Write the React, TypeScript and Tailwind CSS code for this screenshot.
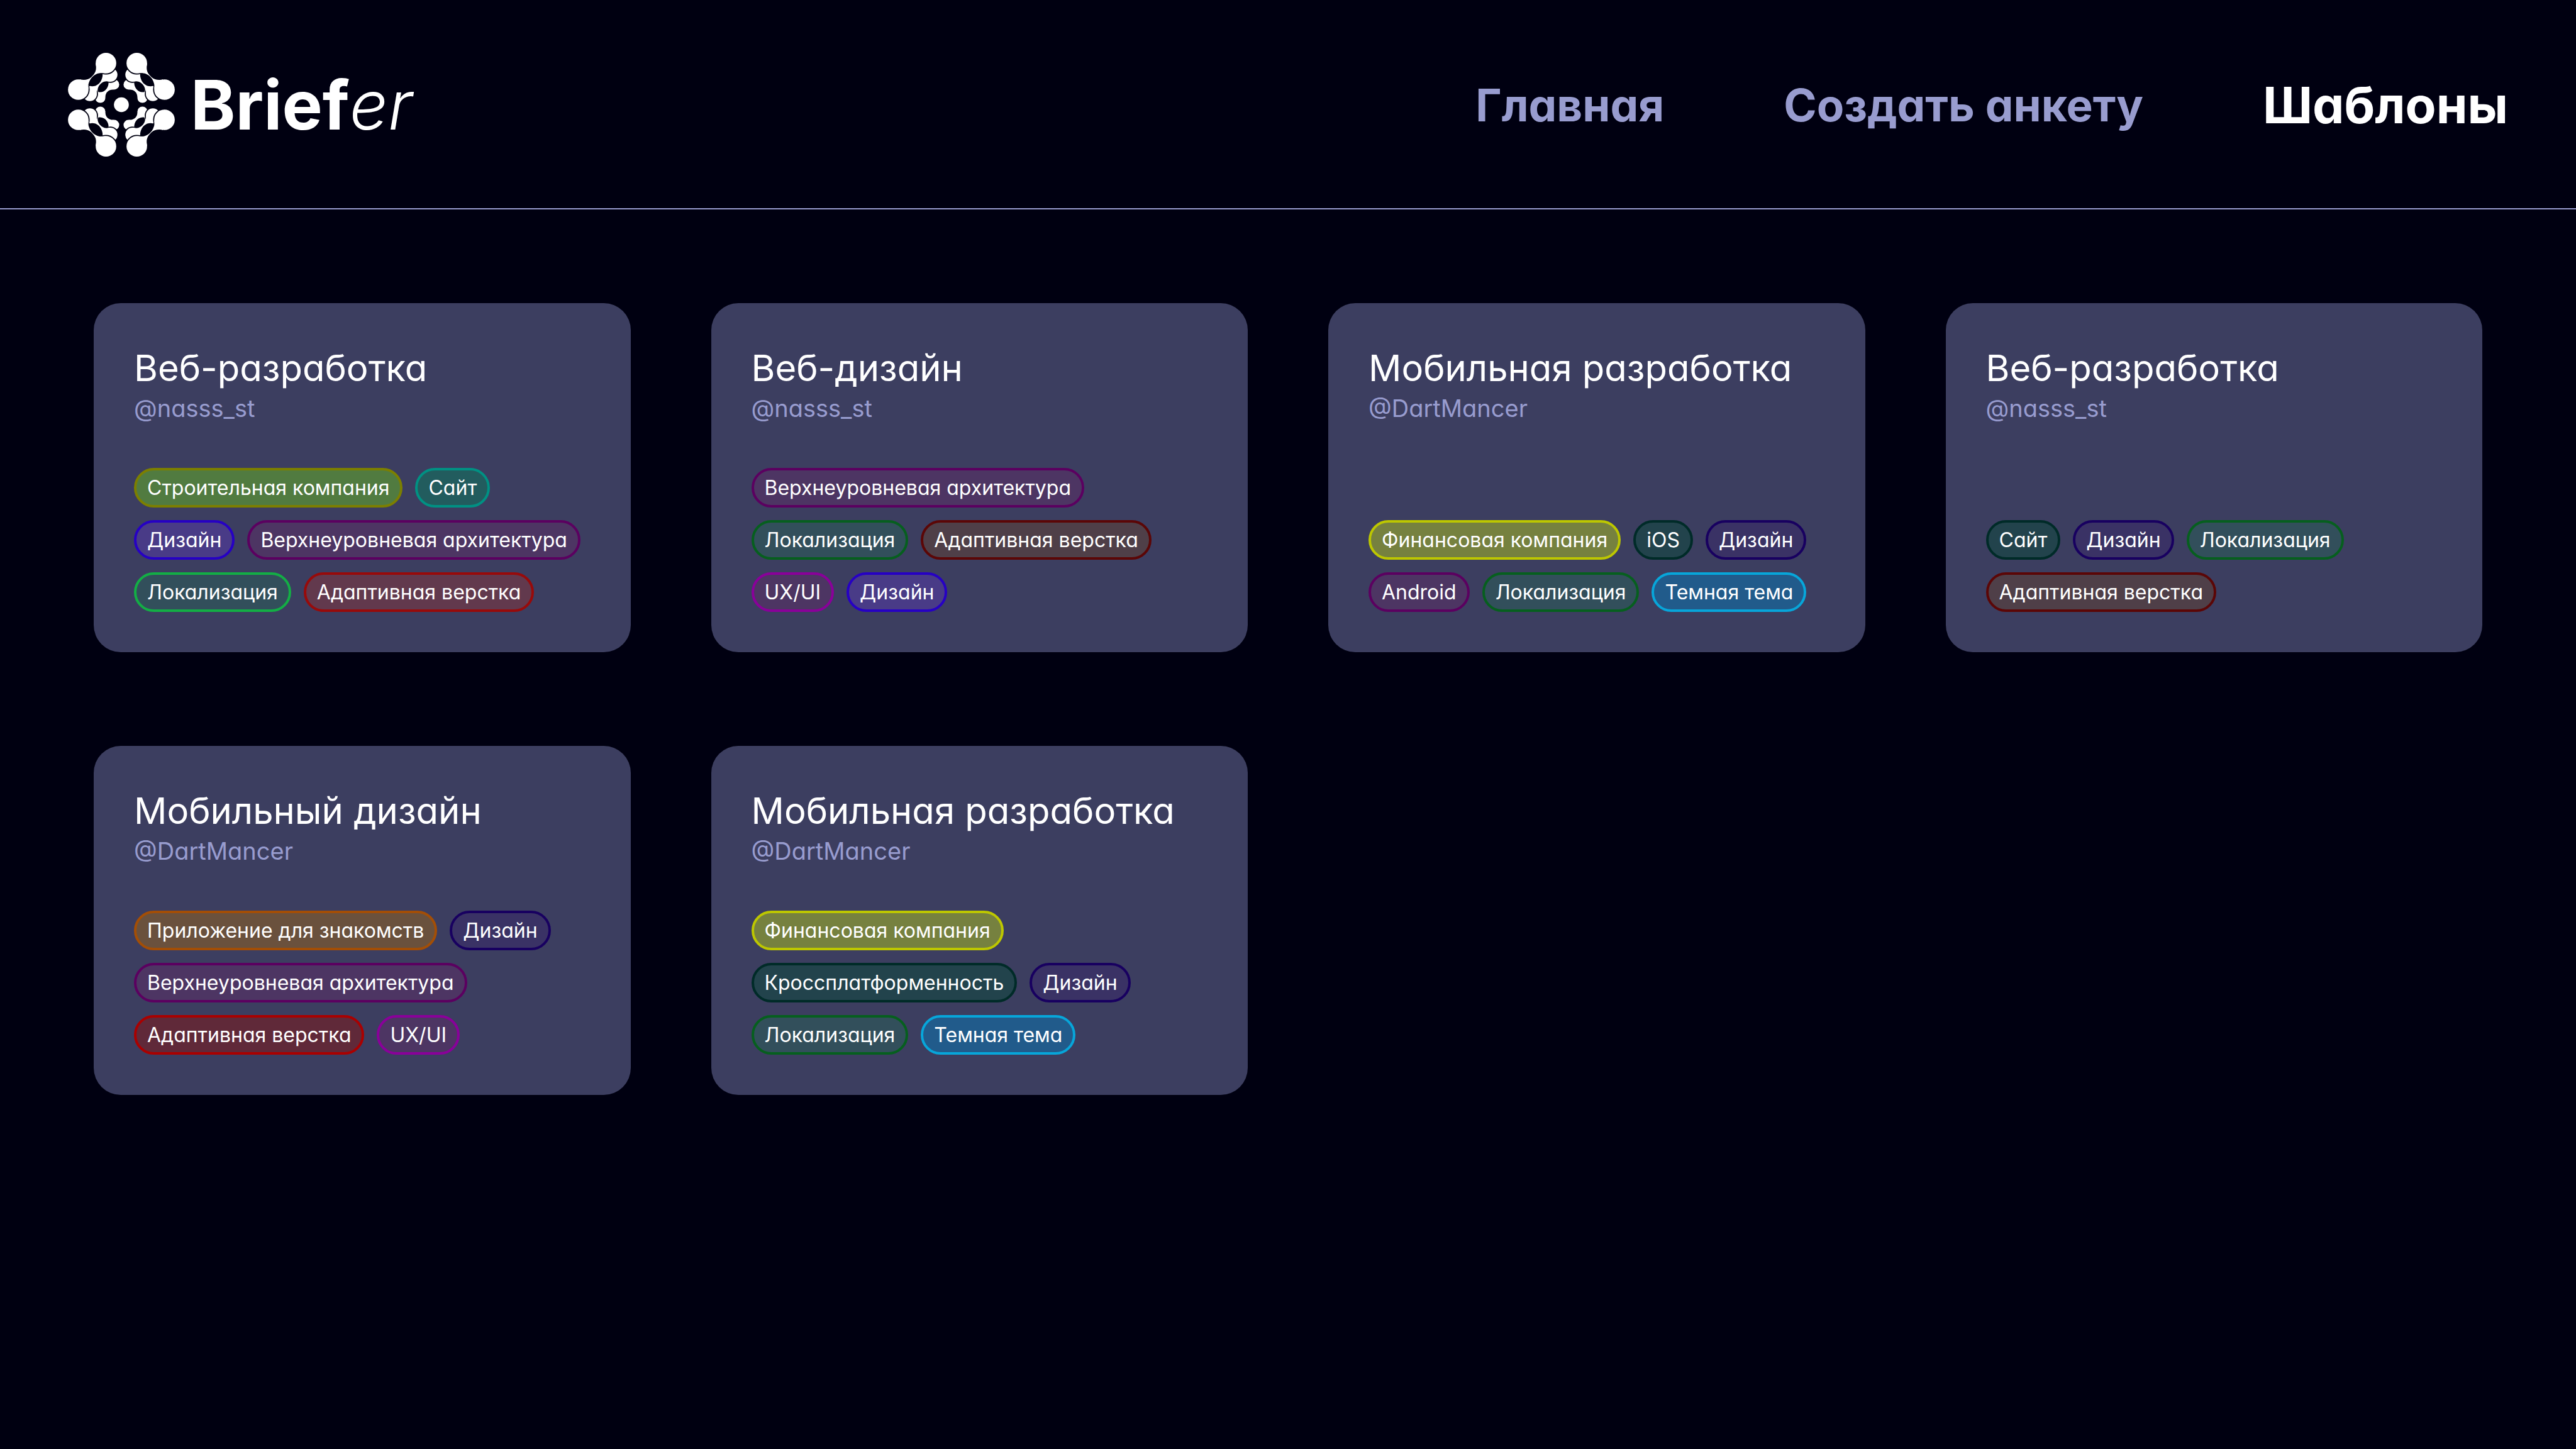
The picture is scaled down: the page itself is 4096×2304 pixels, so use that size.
import React from "react";

const tones = {
  olive: "border-[#7c7f00] bg-[#517b40]",
  teal: "border-[#009183] bg-[#225c5e]",
  tealDark: "border-[#002b28] bg-[#22434c]",
  blue: "border-[#2600c4] bg-[#493b87]",
  blueDark: "border-[#180060] bg-[#3a3265]",
  purple: "border-[#5b0060] bg-[#4d3563]",
  magenta: "border-[#8a009a] bg-[#4d3563]",
  green: "border-[#13ae45] bg-[#324f5b]",
  greenDark: "border-[#065f1e] bg-[#324f5b]",
  red: "border-[#aa0000] bg-[#602939]",
  redSoft: "border-[#980a0a] bg-[#62394d]",
  redDark: "border-[#5b0606] bg-[#4f3f48]",
  yellow: "border-[#bdc700] bg-[#76813f]",
  sky: "border-[#07a6da] bg-[#215b8b]",
  orange: "border-[#a34e06] bg-[#6a513d]",
};

type Tag = { label: string; tone: keyof typeof tones };
type Template = { title: string; author: string; tags: Tag[] };

const templates: Template[] = [
  {
    title: "Веб-разработка",
    author: "@nasss_st",
    tags: [
      { label: "Строительная компания", tone: "olive" },
      { label: "Сайт", tone: "teal" },
      { label: "Дизайн", tone: "blue" },
      { label: "Верхнеуровневая архитектура", tone: "purple" },
      { label: "Локализация", tone: "green" },
      { label: "Адаптивная верстка", tone: "redSoft" },
    ],
  },
  {
    title: "Веб-дизайн",
    author: "@nasss_st",
    tags: [
      { label: "Верхнеуровневая архитектура", tone: "purple" },
      { label: "Локализация", tone: "greenDark" },
      { label: "Адаптивная верстка", tone: "redDark" },
      { label: "UX/UI", tone: "magenta" },
      { label: "Дизайн", tone: "blue" },
    ],
  },
  {
    title: "Мобильная разработка",
    author: "@DartMancer",
    tags: [
      { label: "Финансовая компания", tone: "yellow" },
      { label: "iOS", tone: "tealDark" },
      { label: "Дизайн", tone: "blueDark" },
      { label: "Android", tone: "purple" },
      { label: "Локализация", tone: "greenDark" },
      { label: "Темная тема", tone: "sky" },
    ],
  },
  {
    title: "Веб-разработка",
    author: "@nasss_st",
    tags: [
      { label: "Сайт", tone: "tealDark" },
      { label: "Дизайн", tone: "blueDark" },
      { label: "Локализация", tone: "greenDark" },
      { label: "Адаптивная верстка", tone: "redDark" },
    ],
  },
  {
    title: "Мобильный дизайн",
    author: "@DartMancer",
    tags: [
      { label: "Приложение для знакомств", tone: "orange" },
      { label: "Дизайн", tone: "blueDark" },
      { label: "Верхнеуровневая архитектура", tone: "purple" },
      { label: "Адаптивная верстка", tone: "red" },
      { label: "UX/UI", tone: "magenta" },
    ],
  },
  {
    title: "Мобильная разработка",
    author: "@DartMancer",
    tags: [
      { label: "Финансовая компания", tone: "yellow" },
      { label: "Кроссплатформенность", tone: "tealDark" },
      { label: "Дизайн", tone: "blueDark" },
      { label: "Локализация", tone: "greenDark" },
      { label: "Темная тема", tone: "sky" },
    ],
  },
];

/* One quarter of the mark: three nested dumbbells separated by dark gaps. */
function LogoQuarter({ transform }: { transform?: string }) {
  return (
    <g transform={transform}>
      <g fill="#fff">
        <circle cx="379" cy="296" r="34" />
        <circle cx="286" cy="385" r="34" />
        <path d="M286 385 L240 330 L320 250 L379 296 L375 330 C345 328 320 347 320 380 Z" />
      </g>
      <g fill="#000011" stroke="#000011" strokeWidth="15">
        <circle cx="354" cy="230" r="47" />
        <circle cx="216" cy="360" r="47" />
      </g>
      <g fill="#fff">
        <circle cx="354" cy="230" r="47" />
        <circle cx="216" cy="360" r="47" />
        <path d="M324 200 L190 330 L216 360 L263 357 C262 335 262 318 285 296 C305 277 330 275 354 277 L354 230 Z" />
      </g>
      <path fill="#000011" d="M272 346 C255 318 300 262 341 277 C345 315 315 355 272 346 Z" />
      <g fill="#000011" stroke="#000011" strokeWidth="15">
        <circle cx="324" cy="152" r="69" />
        <circle cx="138" cy="330" r="69" />
      </g>
      <g fill="#fff">
        <circle cx="324" cy="152" r="69" />
        <circle cx="138" cy="330" r="69" />
        <path d="M255 155 C262 200 255 217 225 247 C203 266 178 268 148 262 L138 330 L207 325 L206 300 C206 275 245 222 296 219 L324 219 L324 152 Z" />
      </g>
      <path fill="#000011" d="M214 305 C196 272 250 208 301 221 C306 265 270 320 214 305 Z" />
    </g>
  );
}

function Logo() {
  return (
    <svg viewBox="69 83 717 697" className="h-[165px] w-[170px] shrink-0" aria-hidden="true">
      <LogoQuarter />
      <LogoQuarter transform="matrix(-1 0 0 1 855 0)" />
      <LogoQuarter transform="matrix(1 0 0 -1 0 863)" />
      <LogoQuarter transform="matrix(-1 0 0 -1 855 863)" />
      <circle cx="427.5" cy="431.5" r="50" fill="#fff" />
    </svg>
  );
}

function Header() {
  return (
    <header className="flex items-center justify-between border-b-2 border-[#989ccf] px-[108px] pt-[84px] pb-[82px]">
      <a href="#" className="flex items-center gap-[25px] text-[108px] leading-[130px] text-white">
        <Logo />
        <span className="font-bold">
          Brief<span className="font-light italic">er</span>
        </span>
      </a>
      <nav className="flex items-center gap-[190px] text-[71px] leading-[100px] font-bold whitespace-nowrap text-[#989ccf]">
        <a href="#">Главная</a>
        <a href="#">Создать анкету</a>
        <a href="#" aria-current="page" className="text-[80px] text-white">
          Шаблоны
        </a>
      </nav>
    </header>
  );
}

function TemplateCard({ title, author, tags }: Template) {
  return (
    <article className="flex min-h-[555px] flex-col justify-between rounded-[43px] bg-[#3c3e60] p-[64px]">
      <div>
        <h2 className="text-[58px] leading-[78px] whitespace-nowrap text-white">{title}</h2>
        <p className="text-[38px] leading-[50px] text-[#989ccf]">{author}</p>
      </div>
      <ul className="flex flex-wrap gap-[20px]">
        {tags.map((tag) => (
          <li
            key={tag.label}
            className={`flex h-[63px] items-center rounded-full border-4 px-[17px] text-[32px] whitespace-nowrap text-white ${tones[tag.tone]}`}
          >
            {tag.label}
          </li>
        ))}
      </ul>
    </article>
  );
}

export default function App() {
  return (
    <div className="min-h-screen bg-[#000011] font-['Inter','Noto_Sans',sans-serif] [font-feature-settings:'cv11','ss03']">
      <Header />
      <main className="grid grid-cols-4 gap-x-[128px] gap-y-[149px] p-[149px]">
        {templates.map((template, index) => (
          <TemplateCard key={index} {...template} />
        ))}
      </main>
    </div>
  );
}
